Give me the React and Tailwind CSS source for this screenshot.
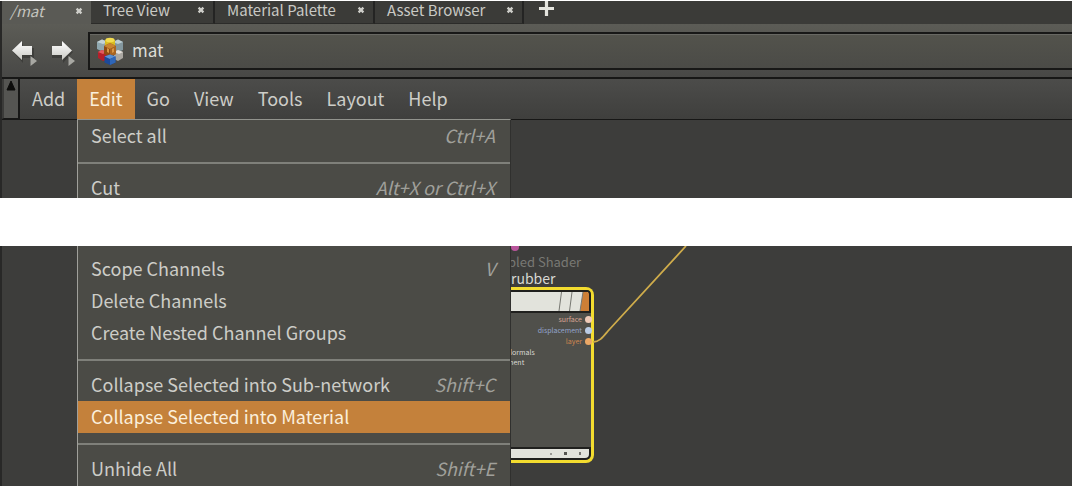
import React from "react";

const FONT = "font-['Noto_Sans_CJK_SC','Open_Sans',sans-serif]";

function CloseIcon() {
  return (
    <svg viewBox="0 0 8 8" className="size-2" aria-hidden="true">
      <path d="M1.6 1.6 6.4 6.4M6.4 1.6 1.6 6.4" stroke="#cfcfca" strokeWidth="2.3" />
    </svg>
  );
}

function Tab({ label, active, className }) {
  return (
    <div
      role="tab"
      aria-selected={!!active}
      className={
        "flex h-[23px] shrink-0 items-center justify-between pb-1 text-[15px] leading-5 " +
        (active
          ? "bg-[#5a5a55] pl-2 pr-2 italic text-[#c4c4be] "
          : "border-r-2 border-b border-r-[#242423] border-b-[#2c2c2a] bg-[#3b3b38] pl-3 pr-2 text-[#c9c9c4] ") +
        className
      }
    >
      <span className="whitespace-nowrap">{label}</span>
      <button type="button" aria-label={"Close " + label}>
        <CloseIcon />
      </button>
    </div>
  );
}

function NavArrow({ label, back }) {
  return (
    <button type="button" aria-label={label} className="h-8 w-7 shrink-0">
      <svg viewBox="0 0 28 32" className="h-8 w-7">
        <defs>
          <linearGradient id={back ? "ab" : "af"} x1="0" y1="0" x2="0" y2="1">
            <stop offset="0" stopColor="#ffffff" />
            <stop offset="1" stopColor="#c9c9c4" />
          </linearGradient>
        </defs>
        <path
          d={back ? "M3 17 13 8v5h11v10H13v5Z" : "M25 17 15 8v5H4v10h11v5Z"}
          fill="#30302e"
          opacity=".55"
        />
        <path
          d={back ? "M2 15.500 12 6v5h10v9H12v5Z" : "M24 15.500 14 6v5H4v9h10v5Z"}
          fill={back ? "url(#ab)" : "url(#af)"}
        />
        <path d="M20.500 21v10l6.500-5Z" fill="#a8a8a3" />
      </svg>
    </button>
  );
}

function MaterialIcon() {
  return (
    <svg viewBox="0 0 28 28" className="size-7 shrink-0" aria-hidden="true">
      <path d="M1 5 6 2.500 12 5v8l-5 2-6-3Z" fill="#8fa7ae" />
      <path d="m1 5 5-2.500L12 5 7 7Z" fill="#c3d3d6" />
      <path d="m17 5 5-2.500L27 5v8l-5 2-5-2Z" fill="#83979e" />
      <path d="m17 5 5-2.500L27 5l-5 2Z" fill="#bccdd1" />
      <path d="m9 3 5-2 5 2v5l-5 2-5-2Z" fill="#d8bd22" />
      <ellipse cx="14" cy="3" rx="4.500" ry="2.300" fill="#f2dd50" />
      <path d="m2 15 4-2 5 2v8l-4 1-5-3Z" fill="#b51f2b" />
      <path d="m2 15 4-2 5 2-4 2Z" fill="#e35a5f" />
      <path d="m18 15 4-2 5 2v6l-5 3-4-2Z" fill="#aaa7a1" />
      <path d="m18 15 4-2 5 2-4 2Z" fill="#e5e1db" />
      <path d="m8 9 6-3 6 3v8l-6 3-6-3Z" fill="#8f4a13" />
      <path d="m8 9 6-3 6 3-6 3Z" fill="#c78431" />
      <path d="m14 12 6-3v8l-6 3Z" fill="#a96521" />
      <path d="m11 11 2 1v4l-2-1Zm5 1 2-1v4l-2 1Z" fill="#d99542" />
      <path d="m8.500 19.500 5.500-2 5.500 2v6L14 28l-5.500-2.500Z" fill="#1d4a99" />
      <path d="m8.500 19.500 5.500-2 5.500 2L14 22Z" fill="#5c91d4" />
      <path d="m14 22 5.500-2.500v6L14 28Z" fill="#2e66b8" />
    </svg>
  );
}

function MenuItem({ label, shortcut, selected, cut }) {
  return (
    <button
      type="button"
      role="menuitem"
      className={
        "flex w-full items-start justify-between overflow-hidden whitespace-nowrap pl-[13px] pr-[15px] text-left text-lg leading-[30px] " +
        (cut ? "h-[26px] " : "h-8 ") +
        (selected ? "bg-[#c4813b] text-[#fbefdc]" : "text-[#cdcdc8]")
      }
    >
      <span>{label}</span>
      {shortcut && <span className="italic text-[#a0a09b]">{shortcut}</span>}
    </button>
  );
}

function Separator() {
  return (
    <div role="separator" className="h-5 pt-[10px]">
      <div className="h-[2px] bg-[#7f807a]" />
    </div>
  );
}

function MenuPanel({ children, className }) {
  return (
    <div
      role="menu"
      className={
        "w-[434px] shrink-0 border-x border-l-[#a0a09b] border-r-[#30302e] bg-[#4b4b46] " +
        className
      }
    >
      {children}
    </div>
  );
}

function Port({ label, text, dot }) {
  return (
    <div className="flex h-[11px] items-center justify-end gap-[3px]">
      <span className={"text-[7px] leading-[11px] " + text}>{label}</span>
      <span className={"-mr-px size-[7px] rounded-full " + dot} />
    </div>
  );
}

function ShaderNode() {
  return (
    <div className="absolute left-0 top-[41px] flex h-[176px] w-[83px] flex-col rounded-r-lg border-y-[3px] border-r-[3px] border-[#f3dc2f] bg-[#50504b]">
      <svg viewBox="0 0 80 23" className="h-[23px] w-full shrink-0" aria-hidden="true">
        <path d="M0 0H76Q80 0 80 5V23H0Z" fill="#20201e" />
        <path d="M0 2H77V21H0Z" fill="#e2e3dc" />
        <path d="M72 2h4q2 0 2 2v17H69Z" fill="#cd7f36" />
        <path d="M50.500 2 48 21M61 2l-2.500 19M72 2l-3 19" stroke="#777872" />
      </svg>
      <div className="flex flex-col pt-px">
        <Port label="surface" text="text-[#d9a493]" dot="bg-[#efcbb9]" />
        <Port label="displacement" text="text-[#93a4cb]" dot="bg-[#b9cce6]" />
        <Port label="layer" text="text-[#cf8650]" dot="bg-[#eca866]" />
      </div>
      <div className="-ml-1 text-[7px] leading-[10px] text-[#dadad5]">
        <p>Normals</p>
        <p>ment</p>
      </div>
      <div className="mt-auto flex h-[13px] items-center justify-end gap-3 rounded-br-md border-y-2 border-r-2 border-[#20201e] bg-[#e2e3dc] pr-2">
        <span className="size-[2px] bg-[#9a9a95]" />
        <span className="size-[3px] bg-[#555550]" />
        <span className="h-[3px] w-[2px] bg-[#777772]" />
      </div>
    </div>
  );
}

export default function App() {
  return (
    <main className={"flex flex-col gap-12 overflow-hidden bg-white pt-px " + FONT}>
      <section className="border-l-2 border-[#282827] bg-[#3d3d3b]">
        <div role="tablist" className="flex bg-[#3b3b38]">
          <Tab label="/mat" active className="w-[89px]" />
          <Tab label="Tree View" className="w-[124px]" />
          <Tab label="Material Palette" className="w-[160px]" />
          <Tab label="Asset Browser" className="w-[149px]" />
          <button type="button" aria-label="New tab" className="flex h-[22px] w-11 items-start justify-center">
            <svg viewBox="0 0 15 15" className="size-[15px]">
              <path d="M7.500 0v15M0 7.500h15" stroke="#e4e4de" strokeWidth="3.200" />
            </svg>
          </button>
        </div>

        <div className="flex items-center bg-linear-to-b from-[#5c5c56] to-[#484846] pb-[7px] pl-2 pt-2">
          <NavArrow label="Back" back />
          <div className="w-[10px]" />
          <NavArrow label="Forward" />
          <label className="ml-3 flex h-[38px] min-w-0 flex-1 items-center gap-2 border-y-2 border-l-2 border-[#181817] bg-linear-to-b from-[#53534c] to-[#4b4b47] pl-[6px] shadow-[inset_0_1px_0_#686863]">
            <MaterialIcon />
            <input
              aria-label="Path"
              defaultValue="mat"
              className="h-6 min-w-0 flex-1 bg-transparent pb-1 text-[17px] leading-5 text-[#dcdcd6] outline-none"
            />
          </label>
        </div>

        <nav
          aria-label="Main menu"
          className="flex h-[42px] border-t-2 border-[#171716] bg-linear-to-b from-[#4c4c4a] to-[#3f3f3d]"
        >
          <div className="w-[18px] shrink-0 border-b border-r-2 border-l-2 border-b-[#171716] border-l-[#3b3b39] border-r-[#171716] bg-[#555552]">
            <svg viewBox="0 0 12 14" className="ml-px h-[14px] w-3" aria-hidden="true">
              <path d="M6 2 10 11H2Z" fill="#0c0c0b" stroke="#0c0c0b" />
            </svg>
          </div>
          <div className="flex text-lg leading-[38px] text-[#cdcdc8]">
            {["Add", "Edit", "Go", "View", "Tools", "Layout", "Help"].map((m) => (
              <button
                key={m}
                type="button"
                className={"h-10 px-3 pb-[2px] " + (m === "Edit" ? "bg-[#c4813b] text-[#fbefdc]" : "")}
              >
                {m}
              </button>
            ))}
          </div>
        </nav>

        <div className="flex">
          <div className="w-[75px] shrink-0 border-t border-[#171716]" />
          <MenuPanel className="border-t border-t-[#92938d]">
            <MenuItem label="Select all" shortcut="Ctrl+A" />
            <Separator />
            <MenuItem label="Cut" shortcut="Alt+X or Ctrl+X" cut />
          </MenuPanel>
          <div className="flex-1 border-t border-[#171716]" />
        </div>
      </section>

      <section className="flex border-l-2 border-[#282827] bg-[#3d3d3b]">
        <div className="w-[75px] shrink-0" />
        <MenuPanel className="pb-px pt-[7px]">
          <MenuItem label="Scope Channels" shortcut="V" />
          <MenuItem label="Delete Channels" />
          <MenuItem label="Create Nested Channel Groups" />
          <Separator />
          <MenuItem label="Collapse Selected into Sub-network" shortcut="Shift+C" />
          <MenuItem label="Collapse Selected into Material" selected />
          <Separator />
          <MenuItem label="Unhide All" shortcut="Shift+E" />
        </MenuPanel>
        <div className="relative min-w-0 flex-1 overflow-hidden">
          <span className="absolute left-0 top-0 h-[5px] w-2 rounded-b-sm bg-[#b8559b]" />
          <p className="absolute -left-[3px] top-2 text-[13px] leading-4 text-[#797974]">bled Shader</p>
          <p className="absolute left-0 top-6 text-sm leading-4 text-[#d8d8d3]">rubber</p>
          <ShaderNode />
          <svg viewBox="0 0 180 100" className="absolute left-[80px] top-0 h-[100px] w-[180px]" aria-hidden="true">
            <path d="M2 96C9 95.500 12 91 17 85L95 0" fill="none" stroke="#cfac4b" strokeWidth="1.800" />
          </svg>
        </div>
      </section>
    </main>
  );
}
